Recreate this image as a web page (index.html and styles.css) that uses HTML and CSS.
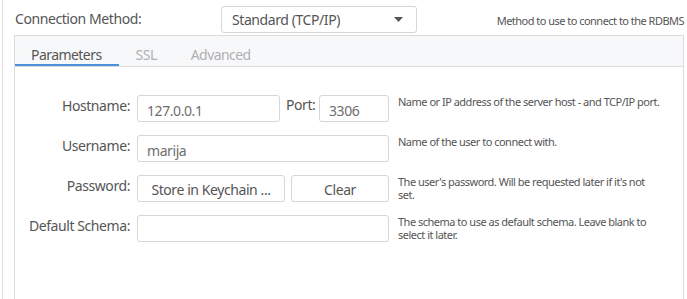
FILE: index.html
```html
<!DOCTYPE html>
<html>
<head>
<meta charset="utf-8">
<link rel="stylesheet" href="styles.css">
</head>
<body>
<div class="frame">
  <div class="toprow">
    <span class="toplabel">Connection Method:</span>
    <div class="select">
      <span>Standard (TCP/IP)</span>
      <svg class="caret" width="9" height="5" viewBox="0 0 9 5"><path d="M0 0h9L4.5 5z" fill="#555"/></svg>
    </div>
    <span class="tophint">Method to use to connect to the RDBMS</span>
  </div>
  <div class="panel">
    <div class="tabs">
      <div class="tab active">Parameters</div>
      <div class="tab">SSL</div>
      <div class="tab">Advanced</div>
    </div>
    <div class="form">
      <div class="label">Hostname:</div>
      <div class="field hostrow">
        <div class="input host">127.0.0.1</div>
        <span class="portlabel">Port:</span>
        <div class="input port">3306</div>
      </div>
      <div class="desc oneline">Name or IP address of the server host - and TCP/IP port.</div>

      <div class="label">Username:</div>
      <div class="field"><div class="input wide">marija</div></div>
      <div class="desc">Name of the user to connect with.</div>

      <div class="label">Password:</div>
      <div class="field btnrow">
        <div class="btn store">Store in Keychain ...</div>
        <div class="btn clear">Clear</div>
      </div>
      <div class="desc">The user's password. Will be requested later if it's not set.</div>

      <div class="label">Default Schema:</div>
      <div class="field"><div class="input wide"></div></div>
      <div class="desc">The schema to use as default schema. Leave blank to select it later.</div>
    </div>
  </div>
</div>
</body>
</html>
```

FILE: styles.css
```css
* { box-sizing: border-box; }
html, body { margin: 0; padding: 0; background: #fff; }
body {
  font-family: "Noto Sans", "DejaVu Sans", sans-serif;
  color: #555;
  width: 687px;
  height: 299px;
  overflow: hidden;
}
.frame {
  margin-left: 2px;
  border-left: 1px solid #dcdcdc;
  height: 299px;
  padding-left: 11px;
  padding-right: 3px;
}
.toprow {
  height: 35px;
  display: flex;
  align-items: flex-start;
}
.toplabel {
  font-size: 14px;
  margin-top: 9px;
  margin-left: 1px;
  width: 206px;
  letter-spacing: -0.42px;
}
.select {
  margin-top: 6px;
  width: 196px;
  height: 27px;
  border: 1px solid #d6d6d6;
  border-radius: 3px;
  display: flex;
  align-items: center;
  justify-content: space-between;
  padding: 0 13px 0 10px;
  font-size: 14px;
  color: #555;
  letter-spacing: -0.42px;
}
.caret { display: block; }
.tophint {
  margin-left: auto;
  margin-top: 13px;
  font-size: 11px;
  letter-spacing: -0.52px;
  color: #555;
}
.panel {
  border: 1px solid #dcdcdc;
  border-bottom: none;
  height: 270px;
}
.tabs {
  display: flex;
  height: 31px;
  background: #f7f8fa;
  border-bottom: 1px solid #dcdcdc;
}
.tab {
  padding: 9px 17px 0;
  font-size: 14px;
  color: #b0b0b0;
  letter-spacing: -0.55px;
}
.tab.active {
  color: #555;
  border-bottom: 2px solid #4a8fdb;
  padding-left: 16px;
}
.form {
  display: grid;
  grid-template-columns: 115px 252px 267px;
  column-gap: 7px;
  row-gap: 13px;
  padding-top: 28px;
}
.label {
  text-align: right;
  font-size: 14px;
  padding-top: 1px;
  letter-spacing: -0.42px;
}
.field { display: flex; height: 27px; }
.input {
  height: 27px;
  border: 1px solid #d6d6d6;
  border-radius: 3px;
  font-size: 14px;
  color: #6e6e6e;
  padding: 5px 0 0 9px;
  letter-spacing: -0.42px;
}
.host { width: 143px; }
.portlabel { width: 39px; padding-left: 6px; font-size: 14px; letter-spacing: -0.42px; }
.port { width: 70px; }
.wide { width: 252px; }
.btnrow { gap: 6px; }
.btn {
  height: 27px;
  border: 1px solid #d6d6d6;
  border-radius: 3px;
  font-size: 14px;
  color: #555;
  text-align: center;
  padding-top: 4px;
  letter-spacing: -0.42px;
}
.store { width: 148px; }
.clear { width: 98px; }
.desc {
  margin-left: 2px;
  font-size: 11px;
  line-height: 13px;
  letter-spacing: -0.5px;
  color: #555;
}
.oneline { white-space: nowrap; }
```
